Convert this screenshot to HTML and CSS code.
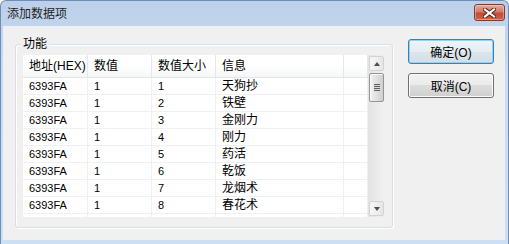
FILE: index.html
```html
<!DOCTYPE html>
<html lang="zh-CN">
<head>
    <meta charset="UTF-8">
    <title>添加数据项</title>
    <link rel="stylesheet" href="styles.css">
</head>
<body>

    <div class="window">
        <div class="titlebar">
            <span class="title">添加数据项</span>
            <button class="close-button" aria-label="关闭">
                <svg width="13" height="10" viewBox="0 0 13 10">
                    <path d="M2 1.5 L11 8.5 M11 1.5 L2 8.5" stroke="#4a2018" stroke-width="4" stroke-linecap="square"/>
                    <path d="M2 1.5 L11 8.5 M11 1.5 L2 8.5" stroke="#ffffff" stroke-width="2.2" stroke-linecap="square"/>
                </svg>
            </button>
        </div>

        <div class="frame">
            <div class="client">
                <fieldset class="group">
                    <legend>功能</legend>
                    <div class="list">
                        <div class="list-body">
                            <div class="list-header">
                                <div class="col-head">地址(HEX)</div>
                                <div class="col-head">数值</div>
                                <div class="col-head">数值大小</div>
                                <div class="col-head">信息</div>
                                <div class="col-head"></div>
                            </div>
                            <div class="list-rows">
                                <div class="cell num">6393FA</div><div class="cell num">1</div><div class="cell num">1</div><div class="cell">天狗抄</div><div class="cell"></div>
                                <div class="cell num">6393FA</div><div class="cell num">1</div><div class="cell num">2</div><div class="cell">铁壁</div><div class="cell"></div>
                                <div class="cell num">6393FA</div><div class="cell num">1</div><div class="cell num">3</div><div class="cell">金刚力</div><div class="cell"></div>
                                <div class="cell num">6393FA</div><div class="cell num">1</div><div class="cell num">4</div><div class="cell">刚力</div><div class="cell"></div>
                                <div class="cell num">6393FA</div><div class="cell num">1</div><div class="cell num">5</div><div class="cell">药活</div><div class="cell"></div>
                                <div class="cell num">6393FA</div><div class="cell num">1</div><div class="cell num">6</div><div class="cell">乾饭</div><div class="cell"></div>
                                <div class="cell num">6393FA</div><div class="cell num">1</div><div class="cell num">7</div><div class="cell">龙烟术</div><div class="cell"></div>
                                <div class="cell num">6393FA</div><div class="cell num">1</div><div class="cell num">8</div><div class="cell">春花术</div><div class="cell"></div>
                                <div class="cell"></div><div class="cell"></div><div class="cell"></div><div class="cell"></div><div class="cell"></div>
                            </div>
                        </div>
                        <div class="scrollbar">
                            <div class="scroll-btn"><span class="arrow-up"></span></div>
                            <div class="scroll-track">
                                <div class="scroll-thumb">
                                    <span class="grip"></span>
                                </div>
                            </div>
                            <div class="scroll-btn"><span class="arrow-down"></span></div>
                        </div>
                    </div>
                </fieldset>

                <div class="actions">
                    <button class="btn btn-default">确定(O)</button>
                    <button class="btn">取消(C)</button>
                </div>
            </div>
        </div>
    </div>

</body>
</html>
```

FILE: styles.css
```css
body {
    margin: 0;
    background: #ffffff;
    font-family: "Liberation Sans", "Noto Sans CJK SC", sans-serif;
    font-size: 12px;
    color: #000000;
}
.window {
    width: 509px;
    height: 244px;
    box-sizing: border-box;
    border: 1px solid #6f8db5;
    border-bottom: none;
    border-radius: 6px 6px 0 0;
    background: linear-gradient(#bcd0e9, #c9dbf1 30%, #cddff3);
    display: flex;
    flex-direction: column;
    overflow: hidden;
}
.titlebar {
    height: 25px;
    flex: none;
    display: flex;
    align-items: center;
    justify-content: space-between;
    padding-left: 6px;
}
.title {
    line-height: 14px;
    color: #1e1e1e;
}
.close-button {
    align-self: flex-start;
    margin: 3px 3px 0 0;
    width: 31px;
    height: 17px;
    padding: 0;
    border: 1px solid #7f3a30;
    border-radius: 3px;
    background: linear-gradient(#e6aa9c, #d47a68 45%, #c44a36 55%, #c9654f);
    box-shadow: inset 0 0 0 1px rgba(255,255,255,0.35);
    display: flex;
    align-items: center;
    justify-content: center;
}
.frame {
    flex: 1;
    padding: 0 3px 4px 2px;
    display: flex;
}
.client {
    flex: 1;
    background: #f0f0f0;
    display: flex;
    align-items: flex-start;
    padding: 11px 0 0 12px;
}
.group {
    margin: 0;
    width: 378px;
    height: 191px;
    box-sizing: border-box;
    padding: 4px 7px 9px 7px;
    border: 1px solid #d5dfe5;
    border-radius: 3px;
    box-shadow: inset 1px 1px 0 #ffffff, 1px 1px 0 #ffffff;
    min-width: 0;
}
.group legend {
    margin-left: -2px;
    padding: 0 2px;
    line-height: 14px;
    background: #f0f0f0;
}
.list {
    display: flex;
    height: 162px;
    background: #ffffff;
    overflow: hidden;
}
.list-body {
    width: 345px;
    overflow: hidden;
}
.list-header,
.list-rows {
    display: grid;
    grid-template-columns: 65px 64px 64px 128px 24px;
}
.list-header {
    height: 23px;
    background: linear-gradient(#ffffff, #ffffff 50%, #f5f6f7);
    border-bottom: 1px solid #e5e5e5;
    box-sizing: border-box;
}
.col-head {
    border-right: 1px solid #e3e8ee;
    padding-left: 6px;
    line-height: 22px;
    white-space: nowrap;
    overflow: hidden;
}
.list-rows {
    grid-auto-rows: 17px;
}
.cell {
    border-right: 1px solid #f0f0f0;
    border-bottom: 1px solid #f0f0f0;
    padding-left: 6px;
    line-height: 17px;
    white-space: nowrap;
    overflow: hidden;
}
.cell.num {
    font-size: 11px;
}
.scrollbar {
    width: 17px;
    display: flex;
    flex-direction: column;
    background: linear-gradient(to right, #e3e3e3, #f1f1f1);
}
.scroll-btn {
    height: 17px;
    flex: none;
    box-sizing: border-box;
    margin: 1px;
    height: 15px;
    border: 1px solid #d2d2d2;
    border-radius: 2px;
    background: linear-gradient(to right, #f7f7f7, #e6e6e6);
    display: flex;
    align-items: center;
    justify-content: center;
}
.arrow-up,
.arrow-down {
    width: 0;
    height: 0;
    border-left: 3px solid transparent;
    border-right: 3px solid transparent;
}
.arrow-up {
    border-bottom: 4px solid #4d4d4d;
}
.arrow-down {
    border-top: 4px solid #4d4d4d;
}
.scroll-track {
    flex: 1;
    padding: 1px 1px 0 1px;
}
.scroll-thumb {
    height: 29px;
    box-sizing: border-box;
    border: 1px solid #959595;
    border-radius: 2px;
    background: linear-gradient(to right, #f2f2f2, #e0e0e0 50%, #cfcfcf);
    box-shadow: inset 1px 1px 0 #fafafa;
    display: flex;
    align-items: center;
    justify-content: center;
}
.grip {
    width: 6px;
    height: 7px;
    background: repeating-linear-gradient(#5e5e5e 0, #5e5e5e 1px, #d8d8d8 1px, #d8d8d8 2px);
}
.actions {
    margin: 2px 0 0 15px;
    display: flex;
    flex-direction: column;
    gap: 9px;
}
.btn {
    width: 86px;
    height: 25px;
    padding: 0;
    border: 1px solid #707070;
    border-radius: 3px;
    background: linear-gradient(#f2f2f2, #ebebeb 50%, #dddddd 50%, #cfcfcf);
    box-shadow: inset 0 0 0 1px #fbfbfb;
    font-family: "Liberation Sans", "Noto Sans CJK SC", sans-serif;
    font-size: 12px;
    color: #000000;
}
.btn-default {
    border-color: #3c7fb1;
    background: linear-gradient(#eef4f8, #e6eef3 50%, #dbe5ec 50%, #d3dee6);
    box-shadow: inset 0 0 0 1px #8fd5f3;
}
```
